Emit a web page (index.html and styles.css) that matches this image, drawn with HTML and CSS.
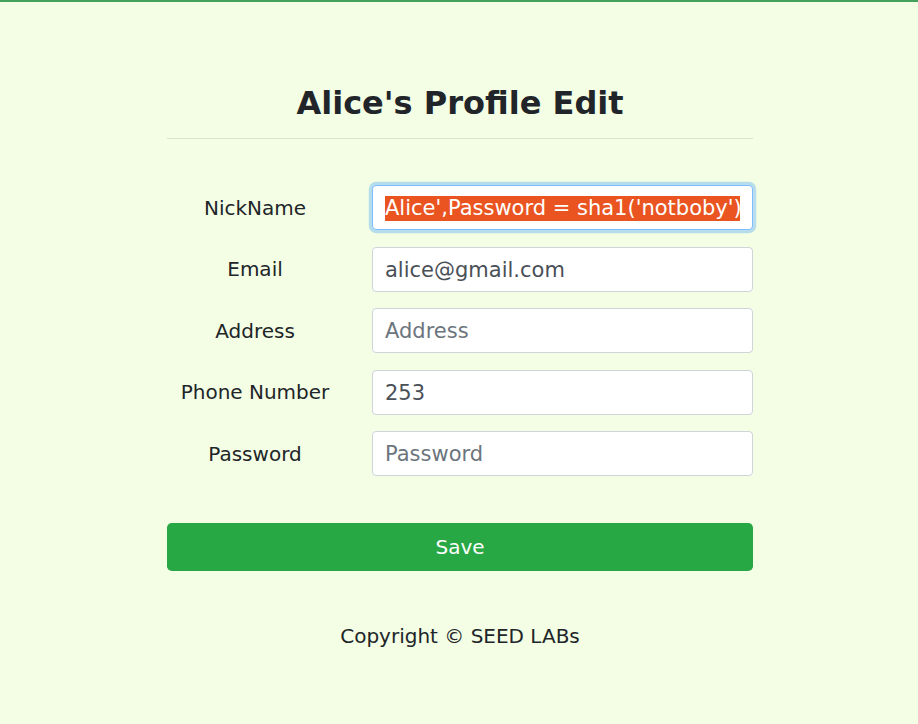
FILE: index.html
```html
<!DOCTYPE html>
<html lang="en">
<head>
<meta charset="utf-8">
<title>Alice's Profile Edit</title>
<link rel="stylesheet" href="styles.css">
</head>
<body>
<div class="page">
  <div class="container">
    <h2 class="title">Alice's Profile Edit</h2>
    <hr class="divider">
    <form class="form">
      <div class="row">
        <label class="label">NickName</label>
        <div class="field focused"><div class="clip"><span class="sel">Alice',Password = sha1('notboby')</span></div></div>
      </div>
      <div class="row">
        <label class="label">Email</label>
        <div class="field"><div class="clip">alice@gmail.com</div></div>
      </div>
      <div class="row">
        <label class="label">Address</label>
        <div class="field placeholder"><div class="clip">Address</div></div>
      </div>
      <div class="row">
        <label class="label">Phone Number</label>
        <div class="field"><div class="clip">253</div></div>
      </div>
      <div class="row">
        <label class="label">Password</label>
        <div class="field placeholder"><div class="clip">Password</div></div>
      </div>
      <div class="btn">Save</div>
    </form>
    <p class="footer">Copyright © SEED LABs</p>
  </div>
</div>
</body>
</html>
```

FILE: styles.css
```css
html, body {
  margin: 0;
  padding: 0;
}
body {
  background: #f3fee4;
  border-top: 2px solid #44a05a;
  font-family: "DejaVu Sans", sans-serif;
  color: #212529;
  min-height: 722px;
}
.page {
  padding-left: 2px;
}
.container {
  width: 586px;
  margin: 0 auto;
  padding-top: 82px;
}
.title {
  margin: 0;
  font-size: 32px;
  line-height: 1.2;
  font-weight: bold;
  text-align: center;
  color: #212529;
}
.divider {
  margin: 16px 0 0;
  border: 0;
  border-top: 1px solid rgba(0, 0, 0, 0.1);
}
.form {
  margin-top: 46px;
  display: flex;
  flex-direction: column;
  gap: 16.5px;
}
.row {
  display: flex;
  align-items: center;
  gap: 29px;
}
.label {
  width: 176px;
  text-align: center;
  font-size: 20px;
  line-height: 1.5;
  color: #212529;
}
.field {
  width: 381px;
  box-sizing: border-box;
  height: 45px;
  padding: 7px 12px 5px;
  border: 1px solid #ced4da;
  border-radius: 4px;
  background: #fff;
  font-size: 21px;
  line-height: 31px;
  color: #495057;
}
.clip {
  overflow: hidden;
  white-space: nowrap;
}
.placeholder {
  color: #6c757d;
}
.focused {
  border-color: #80bdff;
  box-shadow: 0 0 0 3.2px rgba(0, 123, 255, 0.25);
}
.sel {
  background: #e95420;
  color: #fff;
  padding-bottom: 1px;
}
.btn {
  margin-top: 30.5px;
  height: 48px;
  box-sizing: border-box;
  border-radius: 4.8px;
  background: #28a745;
  color: #fff;
  font-size: 20px;
  line-height: 48px;
  text-align: center;
}
.footer {
  margin: 50px 0 0;
  text-align: center;
  font-size: 20px;
  line-height: 1.5;
  color: #212529;
}
```
